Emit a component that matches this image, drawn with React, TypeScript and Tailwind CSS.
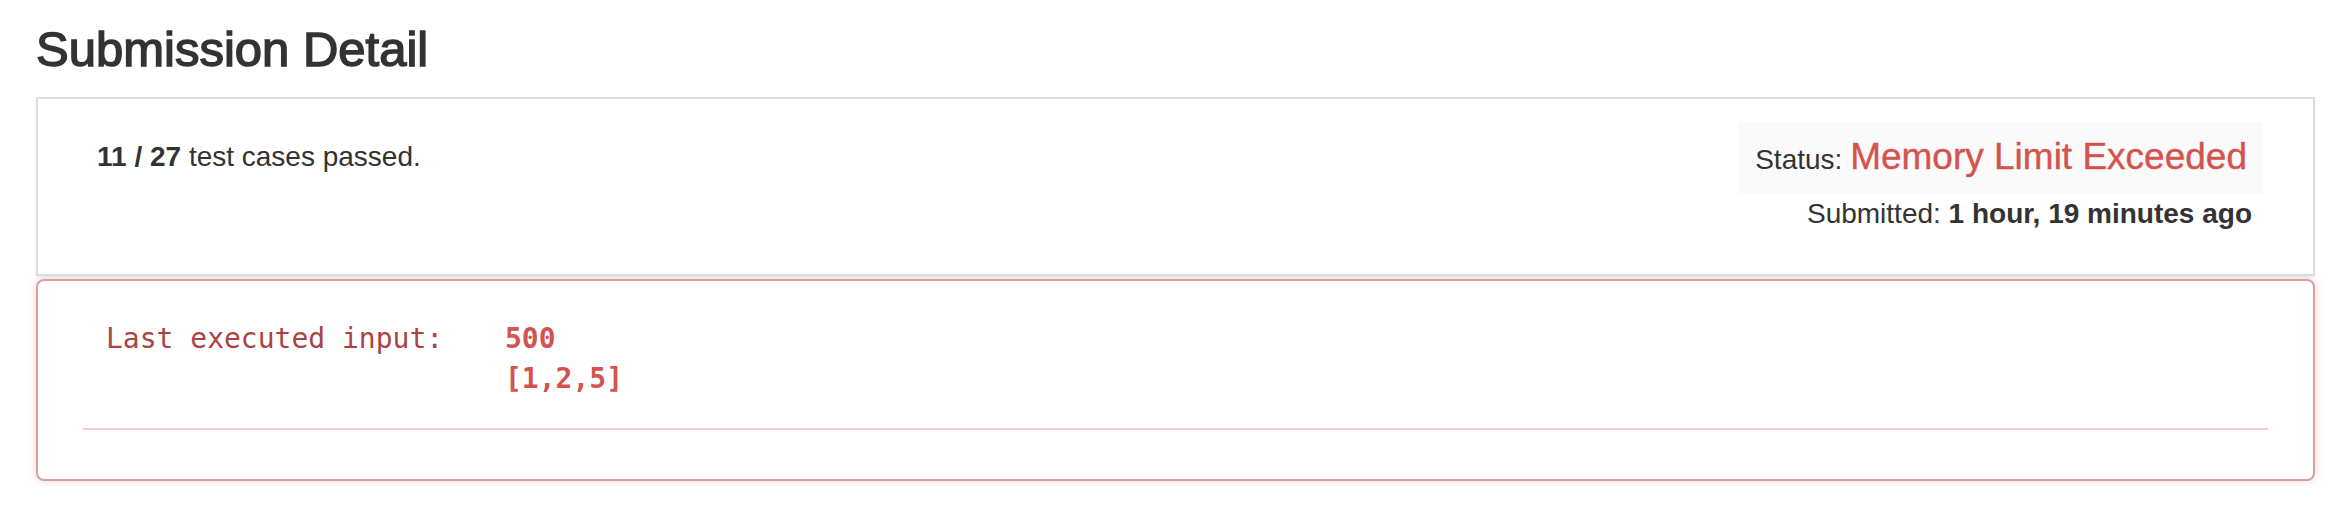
import React from 'react';

interface Verdict {
  passed: number;
  total: number;
  status: string;
  submitted: string;
  lastInput: string[];
}

const verdict: Verdict = {
  passed: 11,
  total: 27,
  status: 'Memory Limit Exceeded',
  submitted: '1 hour, 19 minutes ago',
  lastInput: ['500', '[1,2,5]'],
};

export default function App() {
  return (
    <div className="min-h-[520px] w-full bg-white font-['Liberation_Sans',Arial,sans-serif] text-[#333]">
      <div className="ml-[36px] w-[2279px] pt-[22px]">
        {/* Title */}
        <h1 className="text-[49px] font-normal leading-[54px] text-[#333] [-webkit-text-stroke:1.5px_#333]">
          Submission Detail
        </h1>

        {/* Result summary card */}
        <div className="mt-[21px] box-border flex h-[179px] items-start justify-between border-2 border-[#dedede] pl-[59px] pr-[50px] shadow-[0_2px_3px_rgba(0,0,0,0.06)]">
          <div className="pt-[38px] text-[28px] leading-[40px]">
            <span className="font-bold">
              {verdict.passed} / {verdict.total}
            </span>{' '}
            test cases passed.
          </div>

          <div className="flex flex-col items-end pt-[23px]">
            <div className="bg-[#fafafa] px-[16px] py-[14px] text-[28px] leading-[41px]">
              Status:{' '}
              <span className="text-[37px] text-[#d4534f] [-webkit-text-stroke:0.4px_#d4534f]">
                {verdict.status}
              </span>
            </div>
            <div className="pr-[11px] text-[28px] leading-[40px]">
              Submitted: <span className="font-bold">{verdict.submitted}</span>
            </div>
          </div>
        </div>

        {/* Last executed input panel */}
        <div className="mt-[3px] box-border h-[202px] rounded-[8px] border-2 border-[#d6a0a0] px-[45px] pt-[38px] shadow-[0_0_8px_rgba(200,90,90,0.25)]">
          <div className="flex pl-[23px] font-['DejaVu_Sans_Mono',monospace] text-[28px] leading-[40px]">
            <div className="w-[399px] shrink-0 text-[#a94442]">Last executed input:</div>
            <div className="font-bold text-[#d4534f]">
              {verdict.lastInput.map((line) => (
                <div key={line}>{line}</div>
              ))}
            </div>
          </div>
          <div className="mt-[29px] h-[2px] bg-[#f2cfcf]" />
        </div>
      </div>
    </div>
  );
}
